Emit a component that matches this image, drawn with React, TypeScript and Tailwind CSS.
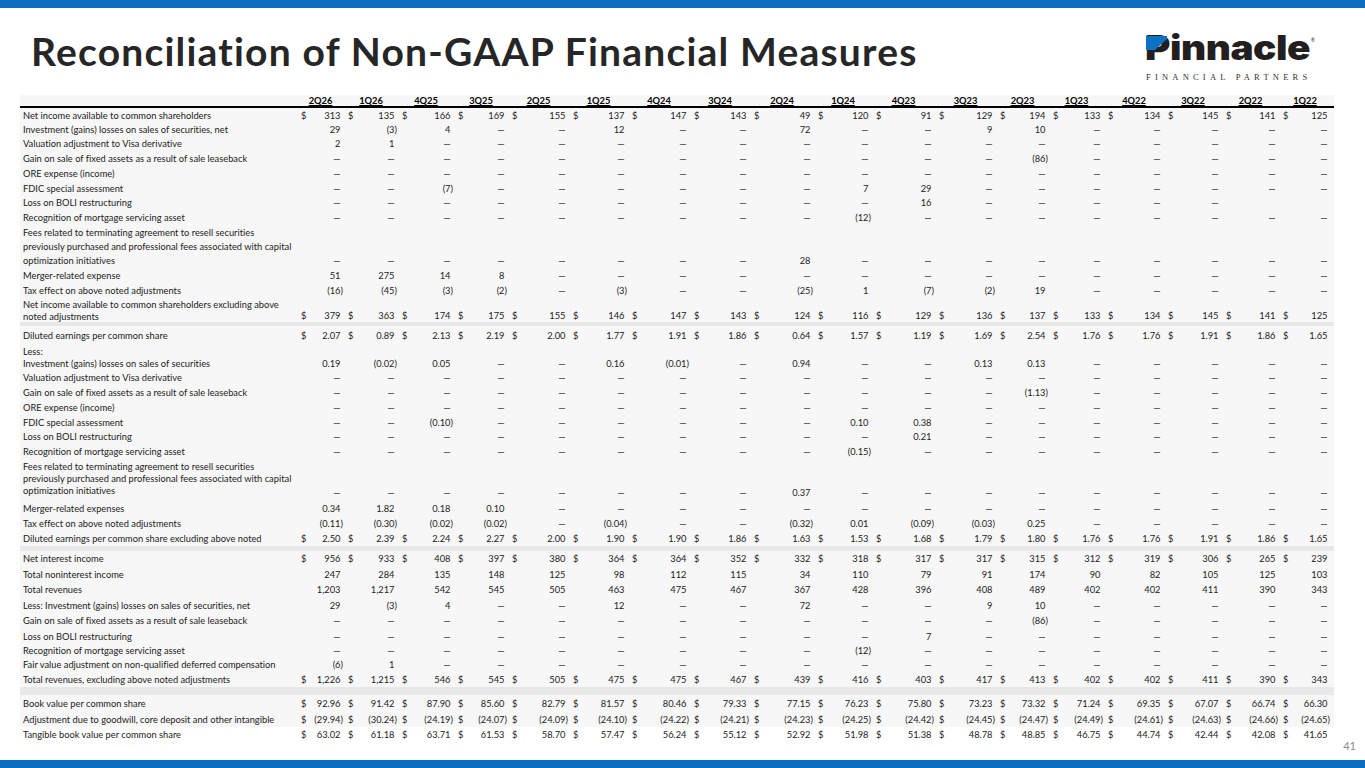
import React from "react";

const D = "—";
const dash = (n: number) => Array(n).fill(D) as string[];
const blank = Array(18).fill("") as string[];

const COLS =
  "grid grid-cols-[280px_47px_54px_56px_54px_61px_59px_62px_60px_64px_58px_63px_61px_53px_55px_60px_58px_57px_52px]";

const QUARTERS = [
  "2Q26", "1Q26", "4Q25", "3Q25", "2Q25", "1Q25", "4Q24", "3Q24", "2Q24",
  "1Q24", "4Q23", "3Q23", "2Q23", "1Q23", "4Q22", "3Q22", "2Q22", "1Q22",
];

type Row = {
  label?: string[];
  vals?: string[];
  d?: boolean;
  h: string;
  lead?: string;
  band?: boolean;
  bg?: string;
};

const ROWS: Row[] = [
  // ── Net income ──
  { label: ["Net income available to common shareholders"], d: true, h: "h-[15px]", vals: ["313", "135", "166", "169", "155", "137", "147", "143", "49", "120", "91", "129", "194", "133", "134", "145", "141", "125"] },
  { label: ["Investment (gains) losses on sales of securities, net"], h: "h-[14px]", vals: ["29", "(3)", "4", D, D, "12", D, D, "72", D, D, "9", "10", ...dash(5)] },
  { label: ["Valuation adjustment to Visa derivative"], h: "h-[14px]", vals: ["2", "1", ...dash(16)] },
  { label: ["Gain on sale of fixed assets as a result of sale leaseback"], h: "h-[15px]", vals: [...dash(12), "(86)", ...dash(5)] },
  { label: ["ORE expense (income)"], h: "h-[15px]", vals: dash(18) },
  { label: ["FDIC special assessment"], h: "h-[15px]", vals: [D, D, "(7)", ...dash(6), "7", "29", ...dash(7)] },
  { label: ["Loss on BOLI restructuring"], h: "h-[14px]", vals: [...dash(10), "16", ...dash(5), "", ""] },
  { label: ["Recognition of mortgage servicing asset"], h: "h-[15px]", vals: [...dash(9), "(12)", ...dash(8)] },
  {
    label: [
      "Fees related to terminating agreement to resell securities",
      "previously purchased and professional fees associated with capital",
      "optimization initiatives",
    ],
    h: "h-[43px]",
    lead: "leading-[14px]",
    vals: [...dash(8), "28", ...dash(9)],
  },
  { label: ["Merger-related expense"], h: "h-[15px]", vals: ["51", "275", "14", "8", ...dash(14)] },
  { label: ["Tax effect on above noted adjustments"], h: "h-[15px]", vals: ["(16)", "(45)", "(3)", "(2)", D, "(3)", D, D, "(25)", "1", "(7)", "(2)", "19", ...dash(5)] },
  {
    label: ["Net income available to common shareholders excluding above", "noted adjustments"],
    d: true,
    h: "h-[24px]",
    lead: "leading-[12px]",
    vals: ["379", "363", "174", "175", "155", "146", "147", "143", "124", "116", "129", "136", "137", "133", "134", "145", "141", "125"],
  },
  { band: true, h: "h-[4px]" },

  // ── Diluted EPS ──
  { label: ["Diluted earnings per common share"], d: true, h: "h-[19px]", vals: ["2.07", "0.89", "2.13", "2.19", "2.00", "1.77", "1.91", "1.86", "0.64", "1.57", "1.19", "1.69", "2.54", "1.76", "1.76", "1.91", "1.86", "1.65"] },
  { label: ["Less:"], h: "h-[12px]", vals: blank },
  { label: ["Investment (gains) losses on sales of securities"], h: "h-[14px]", vals: ["0.19", "(0.02)", "0.05", D, D, "0.16", "(0.01)", D, "0.94", D, D, "0.13", "0.13", ...dash(5)] },
  { label: ["Valuation adjustment to Visa derivative"], h: "h-[14px]", vals: dash(18) },
  { label: ["Gain on sale of fixed assets as a result of sale leaseback"], h: "h-[15px]", vals: [...dash(12), "(1.13)", ...dash(5)] },
  { label: ["ORE expense (income)"], h: "h-[15px]", vals: dash(18) },
  { label: ["FDIC special assessment"], h: "h-[15px]", vals: [D, D, "(0.10)", ...dash(6), "0.10", "0.38", ...dash(7)] },
  { label: ["Loss on BOLI restructuring"], h: "h-[14px]", vals: [...dash(10), "0.21", ...dash(7)] },
  { label: ["Recognition of mortgage servicing asset"], h: "h-[16px]", vals: [...dash(9), "(0.15)", ...dash(8)] },
  {
    label: [
      "Fees related to terminating agreement to resell securities",
      "previously purchased and professional fees associated with capital",
      "optimization initiatives",
    ],
    h: "h-[40px]",
    lead: "leading-[12px]",
    vals: [...dash(8), "0.37", ...dash(9)],
  },
  { label: ["Merger-related expenses"], h: "h-[17px]", vals: ["0.34", "1.82", "0.18", "0.10", ...dash(14)] },
  { label: ["Tax effect on above noted adjustments"], h: "h-[14px]", vals: ["(0.11)", "(0.30)", "(0.02)", "(0.02)", D, "(0.04)", D, D, "(0.32)", "0.01", "(0.09)", "(0.03)", "0.25", ...dash(5)] },
  { label: ["Diluted earnings per common share excluding above noted"], d: true, h: "h-[15px]", vals: ["2.50", "2.39", "2.24", "2.27", "2.00", "1.90", "1.90", "1.86", "1.63", "1.53", "1.68", "1.79", "1.80", "1.76", "1.76", "1.91", "1.86", "1.65"] },
  { band: true, h: "h-[5px]" },

  // ── Revenues ──
  { label: ["Net interest income"], d: true, h: "h-[16px]", vals: ["956", "933", "408", "397", "380", "364", "364", "352", "332", "318", "317", "317", "315", "312", "319", "306", "265", "239"] },
  { label: ["Total noninterest income"], h: "h-[15px]", vals: ["247", "284", "135", "148", "125", "98", "112", "115", "34", "110", "79", "91", "174", "90", "82", "105", "125", "103"] },
  { label: ["Total revenues"], h: "h-[16px]", vals: ["1,203", "1,217", "542", "545", "505", "463", "475", "467", "367", "428", "396", "408", "489", "402", "402", "411", "390", "343"] },
  { label: ["Less: Investment (gains) losses on sales of securities, net"], h: "h-[15px]", vals: ["29", "(3)", "4", D, D, "12", D, D, "72", D, D, "9", "10", ...dash(5)] },
  { label: ["Gain on sale of fixed assets as a result of sale leaseback"], h: "h-[16px]", vals: [...dash(12), "(86)", ...dash(5)] },
  { label: ["Loss on BOLI restructuring"], h: "h-[15px]", vals: [...dash(10), "7", ...dash(7)] },
  { label: ["Recognition of mortgage servicing asset"], h: "h-[13px]", vals: [...dash(9), "(12)", ...dash(8)] },
  { label: ["Fair value adjustment on non-qualified deferred compensation"], h: "h-[15px]", vals: ["(6)", "1", ...dash(16)] },
  { label: ["Total revenues, excluding above noted adjustments"], d: true, h: "h-[15px]", vals: ["1,226", "1,215", "546", "545", "505", "475", "475", "467", "439", "416", "403", "417", "413", "402", "402", "411", "390", "343"] },
  { band: true, h: "h-[8px]" },

  // ── Book value ──
  { label: ["Book value per common share"], d: true, h: "h-[17px]", vals: ["92.96", "91.42", "87.90", "85.60", "82.79", "81.57", "80.46", "79.33", "77.15", "76.23", "75.80", "73.23", "73.32", "71.24", "69.35", "67.07", "66.74", "66.30"] },
  { label: ["Adjustment due to goodwill, core deposit and other intangible"], d: true, h: "h-[15px]", vals: ["(29.94)", "(30.24)", "(24.19)", "(24.07)", "(24.09)", "(24.10)", "(24.22)", "(24.21)", "(24.23)", "(24.25)", "(24.42)", "(24.45)", "(24.47)", "(24.49)", "(24.61)", "(24.63)", "(24.66)", "(24.65)"] },
  { label: ["Tangible book value per common share"], d: true, h: "h-[15px]", bg: "bg-white", vals: ["63.02", "61.18", "63.71", "61.53", "58.70", "57.47", "56.24", "55.12", "52.92", "51.98", "51.38", "48.78", "48.85", "46.75", "44.74", "42.44", "42.08", "41.65"] },
];

function Cell({ v, dollar, multi }: { v: string; dollar?: boolean; multi: boolean }) {
  const paren = v.endsWith(")");
  return (
    <div className={`flex justify-between pl-[1px] pr-[4px] ${multi ? "self-end leading-[12px] pb-[1px]" : ""}`}>
      <span>{dollar ? "$" : ""}</span>
      <span>
        {v}
        {v !== "" && !paren && <span className="invisible">)</span>}
      </span>
    </div>
  );
}

function TableRow({ row }: { row: Row }) {
  if (row.band) return <div className={`${row.h} bg-[#e8e8e8]`} />;
  const multi = (row.label?.length ?? 1) > 1;
  return (
    <div className={`${COLS} ${row.h} ${multi ? "" : "items-center"} ${row.bg ?? ""}`}>
      <div className={`pl-[3px] whitespace-nowrap ${multi ? `${row.lead} pt-[1px]` : ""}`}>
        {row.label?.map((l) => (
          <div key={l}>{l}</div>
        ))}
      </div>
      {row.vals?.map((v, i) => (
        <Cell key={i} v={v} dollar={row.d} multi={multi} />
      ))}
    </div>
  );
}

function Logo() {
  return (
    <div className="flex flex-col items-start mt-[23px] mr-[50px]">
      <div className="relative flex items-start">
        <span className="font-['Inter',sans-serif] text-[34px] leading-[34px] font-black tracking-[-0.4px] text-[#231f20] scale-x-[1.14] origin-left">
          Pinnacle
        </span>
        <span className="text-[5px] leading-[5px] mt-[7px] ml-[21px] text-[#231f20]">®</span>
        <svg className="absolute left-[1px] top-[5px]" width="21" height="14" viewBox="0 0 21 14">
          <polygon points="0,0 21,0 21,3 9,14 0,14" fill="#0b72c4" />
        </svg>
      </div>
      <div className="font-['Liberation_Serif',serif] text-[8.5px] leading-[9px] tracking-[4.2px] text-[#333] mt-[8px] ml-[1px]">
        FINANCIAL PARTNERS
      </div>
    </div>
  );
}

export default function App() {
  return (
    <div className="w-[1365px] h-[768px] flex flex-col bg-white overflow-hidden font-['Lato',sans-serif] text-[#222] [font-variant-ligatures:none]">
      <div className="h-[8px] bg-[#0b6fbf]" />

      {/* ── Title + logo ── */}
      <div className="h-[87px] flex items-start justify-between">
        <h1 className="pl-[31px] pt-[24px] text-[39px] leading-[39px] font-bold tracking-[1.2px] text-[#262626]">
          Reconciliation of Non-GAAP Financial Measures
        </h1>
        <Logo />
      </div>

      {/* ── Table ── */}
      <div className="pl-[20px] text-[9.3px]">
        <div className="w-[1314px] bg-[#f7f7f7]">
          <div className={`${COLS} h-[13px] items-center border-b-2 border-black font-bold text-black`}>
            <div />
            {QUARTERS.map((q) => (
              <div key={q} className="text-center pr-[6px] leading-[11px] underline">
                {q}
              </div>
            ))}
          </div>
          {ROWS.map((r, i) => (
            <TableRow key={i} row={r} />
          ))}
        </div>
      </div>
      <div className="flex justify-end pr-[9px] -mt-[3px] text-[11px] leading-[13px] text-[#8c8c8c]">41</div>

      <div className="flex-1" />
      <div className="h-[8px] bg-[#0b6fbf]" />
    </div>
  );
}
